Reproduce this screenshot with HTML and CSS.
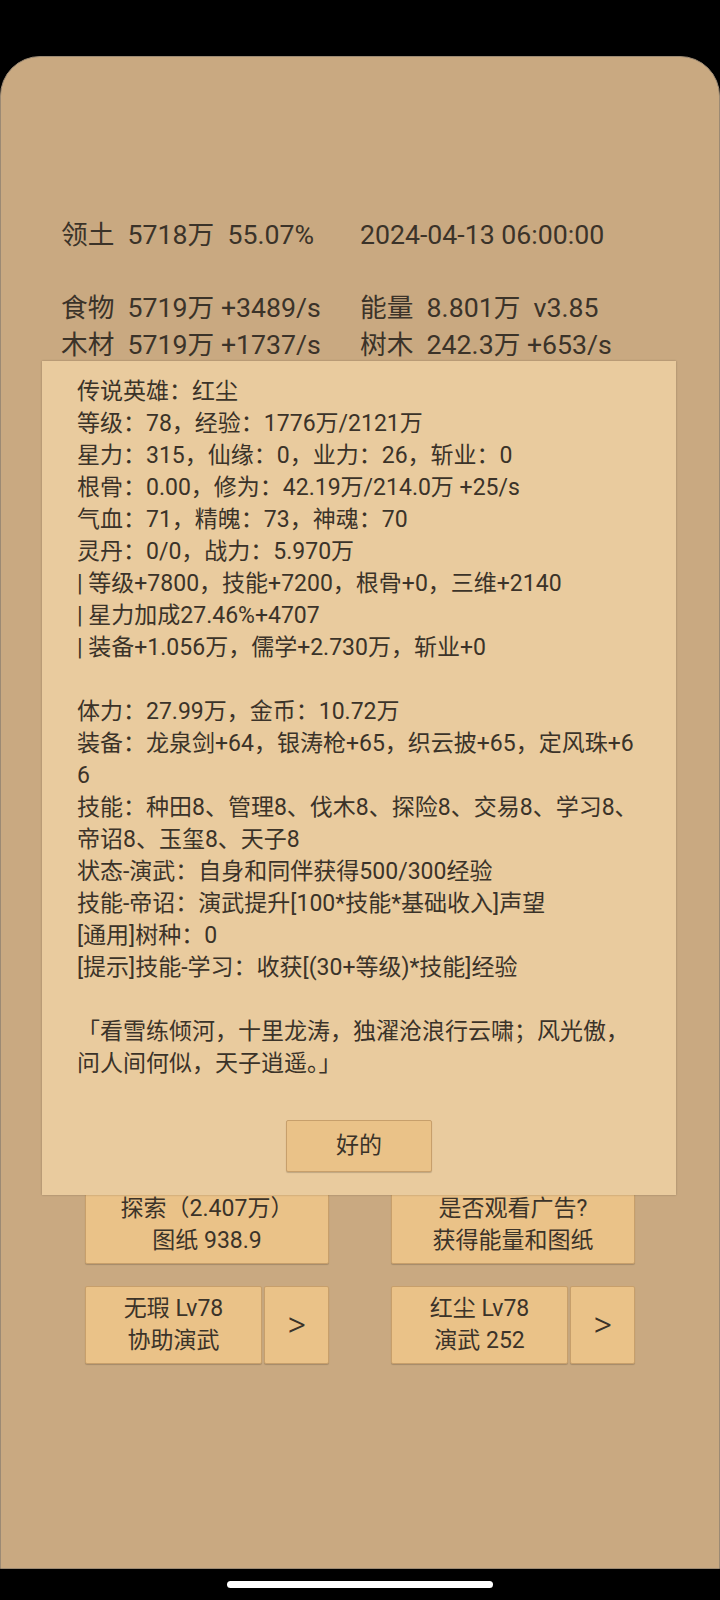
FILE: index.html
```html
<!DOCTYPE html>
<html lang="zh">
<head>
    <meta charset="UTF-8">
    <meta name="viewport" content="width=device-width, initial-scale=1.0">
    <title>领土</title>
    <link rel="stylesheet" href="styles.css">
</head>
<body>
    <div class="card">
        <div class="stats">
            <span>领土  5718万  55.07%</span>
            <span>2024-04-13 06:00:00</span>
            <span class="blank"></span>
            <span>食物  5719万 +3489/s</span>
            <span>能量  8.801万  v3.85</span>
            <span>木材  5719万 +1737/s</span>
            <span>树木  242.3万 +653/s</span>
        </div>

        <div class="actions">
            <button class="btn">探索（2.407万）<br>图纸 938.9</button>
            <button class="btn">是否观看广告?<br>获得能量和图纸</button>
            <div class="pair">
                <button class="btn">无瑕 Lv78<br>协助演武</button>
                <button class="btn arrow">&gt;</button>
            </div>
            <div class="pair">
                <button class="btn">红尘 Lv78<br>演武 252</button>
                <button class="btn arrow">&gt;</button>
            </div>
        </div>

        <div class="dialog">
            <div class="dialog-text">传说英雄：红尘
等级：78，经验：1776万/2121万
星力：315，仙缘：0，业力：26，斩业：0
根骨：0.00，修为：42.19万/214.0万 +25/s
气血：71，精魄：73，神魂：70
灵丹：0/0，战力：5.970万
| 等级+7800，技能+7200，根骨+0，三维+2140
| 星力加成27.46%+4707
| 装备+1.056万，儒学+2.730万，斩业+0

体力：27.99万，金币：10.72万
装备：龙泉剑+64，银涛枪+65，织云披+65，定风珠+66
技能：种田8、管理8、伐木8、探险8、交易8、学习8、帝诏8、玉玺8、天子8
状态-演武：自身和同伴获得500/300经验
技能-帝诏：演武提升[100*技能*基础收入]声望
[通用]树种：0
[提示]技能-学习：收获[(30+等级)*技能]经验

「看雪练倾河，十里龙涛，独濯沧浪行云啸；风光傲，问人间何似，天子逍遥。」</div>
            <div class="dialog-footer">
                <button class="btn ok">好的</button>
            </div>
        </div>
    </div>
    <div class="home-bar"></div>
</body>
</html>
```

FILE: styles.css
```css
body {
    margin: 0;
    padding: 0;
    background-color: #000;
    font-family: Roboto, "Noto Sans CJK SC", sans-serif;
    color: #3b3329;
}

.card {
    position: relative;
    box-sizing: border-box;
    margin-top: 56px;
    height: 1513px;
    background-color: #c9a981;
    border: 1px solid #9c8a74;
    border-radius: 40px 40px 0 0;
}

.stats {
    display: grid;
    grid-template-columns: 299px auto;
    padding: 160px 0 0 60px;
    font-size: 26.7px;
    line-height: 36.5px;
    white-space: pre;
}

.stats .blank {
    grid-column: 1 / 3;
    height: 36.5px;
}

.actions {
    display: grid;
    grid-template-columns: 244px 244px;
    justify-content: center;
    column-gap: 62px;
    row-gap: 22px;
    margin-top: 823px;
}

.btn {
    box-sizing: border-box;
    height: 78px;
    padding: 0;
    font-family: Roboto, "Noto Sans CJK SC", sans-serif;
    font-size: 23px;
    line-height: 32px;
    color: #3b3329;
    background-color: #eac288;
    border: 1px solid #c79f6b;
    border-radius: 2px;
    box-shadow: 0 1px 1px rgba(0, 0, 0, 0.18);
}

.pair {
    display: flex;
    gap: 2px;
}

.pair .btn {
    flex: 1;
}

.pair .arrow {
    flex: 0 0 65px;
    font-size: 36px;
    font-weight: 300;
}

.dialog {
    position: absolute;
    top: 304px;
    left: 41px;
    box-sizing: border-box;
    width: 634px;
    height: 834px;
    padding: 15px 35px 0;
    background-color: #e9cb9e;
    box-shadow: 0 0 2px rgba(0, 0, 0, 0.25);
}

.dialog-text {
    font-size: 23px;
    line-height: 32px;
    white-space: pre-wrap;
    word-break: break-all;
}

.dialog-footer {
    display: flex;
    justify-content: center;
    margin-top: 40px;
}

.btn.ok {
    width: 146px;
    height: 52px;
}

.home-bar {
    width: 266px;
    height: 7px;
    margin: 12px auto 0;
    background-color: #fff;
    border-radius: 4px;
}
```
